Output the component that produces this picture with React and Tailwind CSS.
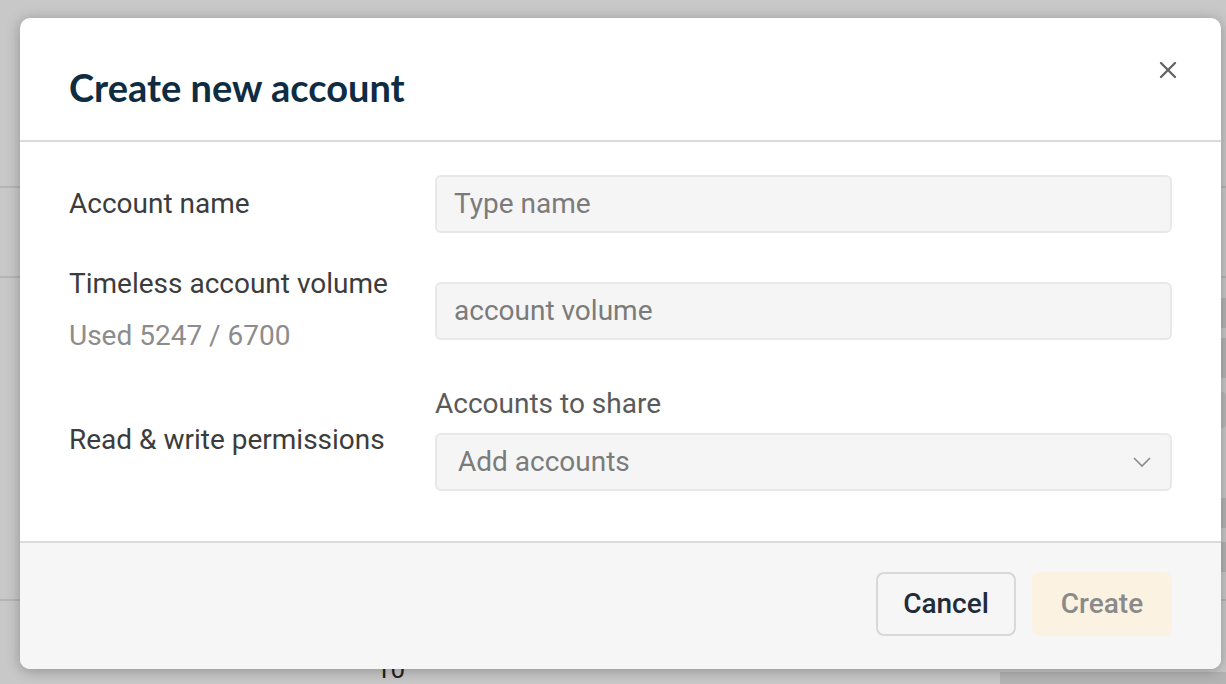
import React from 'react';

const roboto = { fontFamily: 'Roboto, "Liberation Sans", sans-serif' };

const FieldBox = ({ placeholder, select }) => (
  <div className="flex h-[58px] w-full items-center rounded-[6px] border-2 border-[#e8e8e8] bg-[#f5f5f5] pl-[17px] pr-[18px]">
    <span className={`flex-1 text-[28px] text-[#7b7b7b] ${select ? 'pl-[4px]' : ''}`}>{placeholder}</span>
    {select && (
      <svg width="20" height="12" viewBox="0 0 20 12" fill="none" stroke="#8a8a8a" strokeWidth="1.6">
        <path d="M2 2l8 8 8-8" />
      </svg>
    )}
  </div>
);

const Background = () => (
  <div className="flex h-full flex-col">
    <div className="h-[186px]" />
    <div className="h-[2px] bg-[#b5b5b5]" />
    <div className="h-[88px]" />
    <div className="h-[2px] bg-[#b5b5b5]" />
    <div className="flex h-[321px] flex-col items-end pt-[20px]">
      <div className="mb-[10px] h-[30px] w-[40px] bg-[#b4b4b4]" />
      <div className="mb-[14px] h-[40px] w-[40px] bg-[#b4b4b4]" />
      <div className="mb-[70px] h-[36px] w-[40px] rounded-[4px] bg-[#b9b9b9]" />
      <div className="mb-[14px] h-[30px] w-[40px] bg-[#b4b4b4]" />
      <div className="h-[30px] w-[40px] bg-[#b4b4b4]" />
    </div>
    <div className="h-[2px] bg-[#b5b5b5]" />
    <div className="flex flex-1 items-end justify-between pl-[376px]">
      <span className="text-[26px] leading-[30px] text-[#222]" style={roboto}>10</span>
      <div className="h-[12px] w-[226px] bg-[#b4b4b4]" />
    </div>
  </div>
);

export default function App() {
  return (
    <div className="relative h-[684px] w-full overflow-hidden bg-[#c8c8c8]" style={roboto}>
      <Background />
      <div className="absolute left-[20px] top-[18px] flex h-[651px] w-[1201px] flex-col overflow-hidden rounded-[10px] bg-white shadow-[0_2px_14px_rgba(0,0,0,0.28)]">
        <div className="flex h-[124px] items-start justify-between border-b-2 border-[#dadada] pl-[49px] pr-[44px]">
          <h2
            className="mt-[47px] text-[38px] font-bold leading-[44px] text-[#0f2c43]"
            style={{ fontFamily: 'Lato, "Open Sans", sans-serif' }}
          >
            Create new account
          </h2>
          <svg className="mt-[43px]" width="18" height="18" viewBox="0 0 18 18" stroke="#666" strokeWidth="2.4" strokeLinecap="round">
            <path d="M2 2l14 14M16 2L2 16" />
          </svg>
        </div>

        <div className="flex flex-1 flex-col px-[49px] pt-[33px]">
          <div className="flex items-center">
            <div className="w-[366px] text-[28px] text-[#3c3c3c]">Account name</div>
            <div className="flex-1"><FieldBox placeholder="Type name" /></div>
          </div>
          <div className="mt-[34px] flex items-start">
            <div className="w-[366px]">
              <div className="text-[28px] leading-[34px] text-[#3c3c3c]">Timeless account volume</div>
              <div className="mt-[18px] text-[28px] leading-[34px] text-[#8c8c8c]">Used 5247 / 6700</div>
            </div>
            <div className="mt-[15px] flex-1"><FieldBox placeholder="account volume" /></div>
          </div>
          <div className="mt-[35px] flex items-center">
            <div className="w-[366px] text-[28px] text-[#3c3c3c]">Read &amp; write permissions</div>
            <div className="flex flex-1 flex-col gap-[13px]">
              <div className="text-[28px] leading-[32px] text-[#5a5a5a]">Accounts to share</div>
              <FieldBox placeholder="Add accounts" select />
            </div>
          </div>
        </div>

        <div className="flex h-[128px] items-center justify-end gap-[16px] border-t-2 border-[#dadada] bg-[#f6f6f6] pb-[4px] pr-[49px]">
          <button className="h-[64px] w-[140px] rounded-[8px] border-2 border-[#d8d8d8] bg-[#f6f6f6] text-[28px] font-medium text-[#222b3a]">
            Cancel
          </button>
          <button className="h-[64px] w-[140px] rounded-[8px] bg-[#fbf2e1] text-[28px] font-medium text-[#8a8a8a]">
            Create
          </button>
        </div>
      </div>
    </div>
  );
}
